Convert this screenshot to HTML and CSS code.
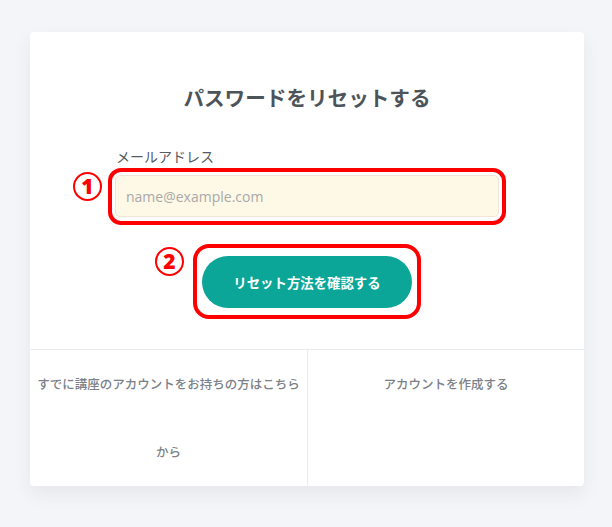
FILE: index.html
```html
<!DOCTYPE html>
<html lang="ja">
<head>
    <meta charset="utf-8" />
    <meta name="viewport" content="width=device-width, initial-scale=1.0" />
    <title>パスワードをリセットする</title>
    <link rel="stylesheet" href="styles.css">
</head>
<body>
    <div class="card">
        <div class="card-body">
            <h1 class="title">パスワードをリセットする</h1>

            <form class="reset-form">
                <label class="field-label" for="email">メールアドレス</label>
                <div class="mark mark-field">
                    <span class="step">1</span>
                    <input type="email" id="email" placeholder="name@example.com" />
                </div>

                <div class="submit-row">
                    <div class="mark mark-button">
                        <span class="step">2</span>
                        <button type="button" class="submit">リセット方法を確認する</button>
                    </div>
                </div>
            </form>
        </div>

        <div class="card-links">
            <a href="#" class="card-link">すでに講座のアカウントをお持ちの方はこちらから</a>
            <a href="#" class="card-link">アカウントを作成する</a>
        </div>
    </div>
</body>
</html>
```

FILE: styles.css
```css
body {
    font-family: "Noto Sans CJK JP", "Noto Sans", sans-serif;
    margin: 0;
    padding: 32px 28px 40px 30px;
    background-color: #f4f5f8;
    color: #50575c;
}

.card {
    background-color: #fff;
    border-radius: 4px;
    box-shadow: 0 8px 18px rgba(40, 50, 70, 0.07);
}

.card-body {
    padding: 50px 0 30px;
    text-align: center;
}

.title {
    margin: 0;
    font-size: 20.6px;
    line-height: 30px;
    font-weight: bold;
    color: #4d5459;
}

.reset-form {
    width: 384px;
    margin: 34px auto 0;
    text-align: left;
}

.field-label {
    display: block;
    padding-left: 1px;
    font-size: 14px;
    line-height: 20px;
    color: #555b60;
}

/* red annotation frames */
.mark {
    position: relative;
    border: 4px solid #f00;
    border-radius: 13px;
}

.mark-field {
    margin: 2px -7px 0;
    padding: 3px 3px 4px;
}

.mark-button {
    display: inline-block;
    padding: 8px 5px 7px;
    border-radius: 16px;
}

.step {
    position: absolute;
    top: 0;
    left: -39px;
    width: 25px;
    height: 25px;
    border: 2px solid #f00;
    border-radius: 50%;
    color: #f00;
    font-family: "Noto Sans", sans-serif;
    font-size: 21px;
    font-weight: 900;
    line-height: 25px;
    text-align: center;
}

.mark-button .step {
    top: -1px;
    left: -42px;
}

input[type="email"] {
    display: block;
    box-sizing: border-box;
    width: 100%;
    height: 42px;
    padding: 0 10px;
    border: 1px solid #f1e6d6;
    border-radius: 5px;
    background-color: #fef8e6;
    font-family: "Open Sans", sans-serif;
    font-size: 14px;
    color: #333;
}

input[type="email"]::placeholder {
    color: #a9a9a9;
}

.submit-row {
    margin-top: 19px;
    text-align: center;
}

.submit {
    display: block;
    width: 210px;
    height: 52px;
    border: none;
    border-radius: 26px;
    background-color: #0ba698;
    color: #fff;
    font-family: "Noto Sans CJK JP", sans-serif;
    font-size: 13.4px;
    font-weight: bold;
    cursor: pointer;
}

.card-links {
    display: grid;
    grid-template-columns: 1fr 1fr;
    border-top: 1px solid #e9ecef;
}

.card-link {
    padding: 0 4px;
    font-size: 12.5px;
    line-height: 68px;
    font-weight: 500;
    color: #7b8188;
    text-align: center;
    text-decoration: none;
}

.card-link + .card-link {
    border-left: 1px solid #e9ecef;
}
```
